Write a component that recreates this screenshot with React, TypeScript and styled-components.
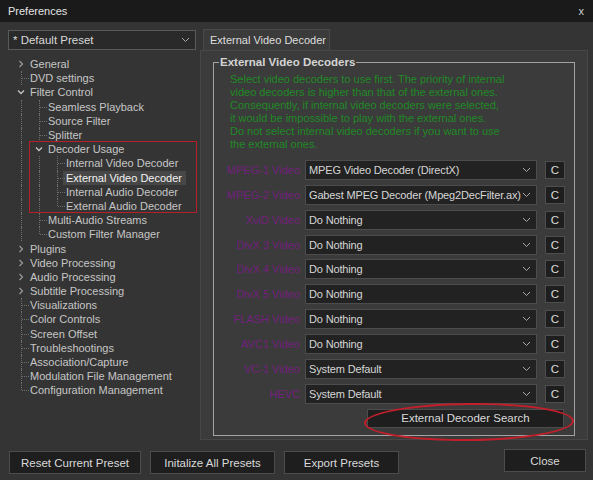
import React from 'react';
import styled, { createGlobalStyle } from 'styled-components';

const Global = createGlobalStyle`
  html, body { margin: 0; padding: 0; background: #343434; }
  body { font-family: "Liberation Sans", Arial, sans-serif; }
  * { box-sizing: border-box; }
`;

const Window = styled.div`
  width: 593px;
  height: 480px;
  background: #343434;
  display: flex;
  flex-direction: column;
  overflow: hidden;
  color: #cfcfcf;
  font-size: 11px;
`;

const TitleBar = styled.div`
  height: 22px;
  flex: none;
  background: #1a1a1a;
  display: flex;
  align-items: center;
  justify-content: space-between;
  padding: 0 9px 0 8px;
  color: #e4e4e4;
  font-size: 11px;
`;

const CloseX = styled.span`
  font-size: 11px;
  color: #d0d0d0;
`;

const Main = styled.div`
  display: flex;
  height: 418px;
  padding: 7px 5px 0 8px;
  gap: 4px;
  flex: none;
`;

const LeftCol = styled.div`
  width: 188px;
  display: flex;
  flex-direction: column;
`;

const PresetSelect = styled.div`
  margin-top: 1px;
  height: 20px;
  border: 1px solid #5a5a5a;
  background: #2a2a2a;
  display: flex;
  align-items: center;
  justify-content: space-between;
  padding: 0 5px 0 4px;
  color: #d8d8d8;
  font-size: 11.5px;
`;

const Tree = styled.div`
  position: relative;
  margin-top: 7px;
  padding-left: 4px;
  display: flex;
  flex-direction: column;
`;

const TreeRow = styled.div`
  height: 14.2px;
  display: flex;
  align-items: stretch;
  white-space: nowrap;
`;

const Guide = styled.span<{ $vt?: boolean; $vb?: boolean; $h?: boolean }>`
  position: relative;
  width: 18px;
  flex: none;
  display: flex;
  align-items: center;
  justify-content: center;
  &::before {
    content: '';
    display: ${p => (p.$vt || p.$vb ? 'block' : 'none')};
    position: absolute;
    left: 9px;
    top: ${p => (p.$vt ? '0' : '50%')};
    bottom: ${p => (p.$vb ? '0' : '50%')};
    border-left: 1px dotted #6e6e6e;
  }
  &::after {
    content: '';
    display: ${p => (p.$h ? 'block' : 'none')};
    position: absolute;
    left: 10px;
    width: 7px;
    top: 50%;
    border-top: 1px dotted #6e6e6e;
  }
`;

const TreeLabel = styled.span<{ $selected?: boolean }>`
  display: flex;
  align-items: center;
  margin-left: -3px;
  padding: 0 4px 0 3px;
  background: ${p => (p.$selected ? '#474747' : 'transparent')};
  color: ${p => (p.$selected ? '#f2f2f2' : '#c6c6c6')};
  font-size: 11px;
`;

const RedBox = styled.div`
  position: absolute;
  left: 21px;
  top: 84px;
  width: 168px;
  height: 72px;
  border: 1px solid #b3222a;
  pointer-events: none;
`;

const RightCol = styled.div`
  width: 388px;
  display: flex;
  flex-direction: column;
`;

const Tab = styled.div`
  margin-left: 3px;
  width: 127px;
  height: 21px;
  background: #3b3b3b;
  border: 1px solid #4a4a4a;
  border-bottom: none;
  display: flex;
  align-items: center;
  padding-left: 6px;
  color: #dedede;
  font-size: 11px;
  white-space: nowrap;
`;

const Panel = styled.div`
  height: 390px;
  background: #3b3b3b;
  border: 1px solid #474747;
  padding: 5px 12px 3px 12px;
  display: flex;
  flex-direction: column;
`;

const GroupBox = styled.fieldset`
  margin: 0;
  flex: 1;
  border: 1px solid #a3a3a3;
  padding: 0;
  min-width: 0;
`;

const Legend = styled.legend`
  margin-left: 5px;
  padding: 0 1px;
  color: #d4d4d4;
  font-weight: bold;
  font-size: 11.5px;
  line-height: 13px;
`;

const GroupInner = styled.div`
  display: flex;
  flex-direction: column;
`;

const Notice = styled.div`
  margin-top: 4px;
  padding-left: 16px;
  color: #1f8a25;
  font-size: 11px;
  line-height: 13px;
  white-space: pre;
`;

const Rows = styled.div`
  margin-top: 9px;
  display: flex;
  flex-direction: column;
  gap: 4.85px;
`;

const DecoderRow = styled.div`
  display: flex;
  align-items: center;
  height: 20px;
`;

const RowLabel = styled.span`
  width: 86px;
  text-align: right;
  color: #74207e;
  font-size: 11px;
  margin-right: 5px;
  white-space: nowrap;
`;

const Combo = styled.div`
  width: 232px;
  height: 20px;
  background: #222222;
  border: 1px solid #4c4c4c;
  display: flex;
  align-items: center;
  justify-content: space-between;
  padding: 0 5px 0 3px;
  color: #d6d6d6;
  font-size: 11px;
  letter-spacing: -0.15px;
  white-space: nowrap;
`;

const CButton = styled.div`
  margin-left: 8px;
  width: 20px;
  height: 18px;
  background: #1e1e1e;
  border: 1px solid #4e4e4e;
  display: flex;
  align-items: center;
  justify-content: center;
  color: #dcdcdc;
  font-size: 11.5px;
`;

const SearchWrap = styled.div`
  position: relative;
  align-self: flex-end;
  margin-top: 5px;
  margin-right: 10px;
`;

const DarkButton = styled.div<{ $w: number; $h?: number }>`
  width: ${p => p.$w}px;
  height: ${p => p.$h ?? 23}px;
  background: #1e1e1e;
  border: 1px solid #4c4c4c;
  display: flex;
  align-items: center;
  justify-content: center;
  color: #dadada;
  font-size: 11.5px;
  white-space: nowrap;
`;

const Ellipse = styled.div`
  position: absolute;
  left: -3px;
  top: -6px;
  width: 210px;
  height: 38px;
  border: 2px solid #c21f2b;
  border-radius: 50%;
  transform: rotate(-0.6deg);
  pointer-events: none;
`;

const BottomBar = styled.div`
  display: flex;
  align-items: flex-start;
  padding: 9px 7px 0 9px;
`;

const BottomButtons = styled.div`
  display: flex;
  gap: 9px;
  margin-top: 2px;
`;

const CloseWrap = styled.div`
  margin-left: auto;
`;

const Chevron = ({ dir }: { dir: 'right' | 'down' }) =>
  dir === 'right' ? (
    <svg width="6" height="8" viewBox="0 0 6 8">
      <polyline points="1.5,1 4.5,4 1.5,7" fill="none" stroke="#9a9a9a" strokeWidth="1.2" />
    </svg>
  ) : (
    <svg width="8" height="6" viewBox="0 0 8 6">
      <polyline points="1,1.5 4,4.5 7,1.5" fill="none" stroke="#c4c4c4" strokeWidth="1.3" />
    </svg>
  );

const ComboArrow = () => (
  <svg width="9" height="6" viewBox="0 0 9 6">
    <polyline points="1,1 4.5,4.5 8,1" fill="none" stroke="#a8a8a8" strokeWidth="1" />
  </svg>
);

type Kind = 'leaf' | 'collapsed' | 'expanded';
type Node = { label: string; depth: number; kind: Kind; selected?: boolean };

const nodes: Node[] = [
  { label: 'General', depth: 0, kind: 'collapsed' },
  { label: 'DVD settings', depth: 0, kind: 'leaf' },
  { label: 'Filter Control', depth: 0, kind: 'expanded' },
  { label: 'Seamless Playback', depth: 1, kind: 'leaf' },
  { label: 'Source Filter', depth: 1, kind: 'leaf' },
  { label: 'Splitter', depth: 1, kind: 'leaf' },
  { label: 'Decoder Usage', depth: 1, kind: 'expanded' },
  { label: 'Internal Video Decoder', depth: 2, kind: 'leaf' },
  { label: 'External Video Decoder', depth: 2, kind: 'leaf', selected: true },
  { label: 'Internal Audio Decoder', depth: 2, kind: 'leaf' },
  { label: 'External Audio Decoder', depth: 2, kind: 'leaf' },
  { label: 'Multi-Audio Streams', depth: 1, kind: 'leaf' },
  { label: 'Custom Filter Manager', depth: 1, kind: 'leaf' },
  { label: 'Plugins', depth: 0, kind: 'collapsed' },
  { label: 'Video Processing', depth: 0, kind: 'collapsed' },
  { label: 'Audio Processing', depth: 0, kind: 'collapsed' },
  { label: 'Subtitle Processing', depth: 0, kind: 'collapsed' },
  { label: 'Visualizations', depth: 0, kind: 'leaf' },
  { label: 'Color Controls', depth: 0, kind: 'leaf' },
  { label: 'Screen Offset', depth: 0, kind: 'leaf' },
  { label: 'Troubleshootings', depth: 0, kind: 'leaf' },
  { label: 'Association/Capture', depth: 0, kind: 'leaf' },
  { label: 'Modulation File Management', depth: 0, kind: 'leaf' },
  { label: 'Configuration Management', depth: 0, kind: 'leaf' },
];

const isLast = (i: number) => {
  const d = nodes[i].depth;
  for (let j = i + 1; j < nodes.length; j++) {
    if (nodes[j].depth < d) return true;
    if (nodes[j].depth === d) return false;
  }
  return true;
};

const ancestorIndex = (i: number, depth: number) => {
  for (let j = i - 1; j >= 0; j--) if (nodes[j].depth === depth) return j;
  return -1;
};

const decoders: [string, string][] = [
  ['MPEG-1 Video', 'MPEG Video Decoder (DirectX)'],
  ['MPEG-2 Video', 'Gabest MPEG Decoder (Mpeg2DecFilter.ax)'],
  ['XviD Video', 'Do Nothing'],
  ['DivX 3 Video', 'Do Nothing'],
  ['DivX 4 Video', 'Do Nothing'],
  ['DivX 5 Video', 'Do Nothing'],
  ['FLASH Video', 'Do Nothing'],
  ['AVC1 Video', 'Do Nothing'],
  ['VC-1 Video', 'System Default'],
  ['HEVC', 'System Default'],
];

const notice = [
  'Select video decoders to use first. The priority of internal',
  'video decoders is higher than that of the external ones.',
  'Consequently, if internal video decoders were selected,',
  'it would be impossible to play with the external ones.',
  'Do not select internal video decoders if you want to use',
  'the external ones.',
].join('\n');

export default function App() {
  return (
    <Window>
      <Global />
      <TitleBar>
        <span>Preferences</span>
        <CloseX>x</CloseX>
      </TitleBar>
      <Main>
        <LeftCol>
          <PresetSelect>
            <span>* Default Preset</span>
            <ComboArrow />
          </PresetSelect>
          <Tree>
            {nodes.map((n, i) => {
              const guides = [];
              for (let k = 0; k < n.depth; k++) {
                const a = ancestorIndex(i, k);
                const cont = a >= 0 && !isLast(a);
                guides.push(<Guide key={k} $vt={cont} $vb={cont} />);
              }
              const own =
                n.kind === 'leaf' ? (
                  <Guide key="own" $vt={i > 0} $vb={!isLast(i)} $h />
                ) : (
                  <Guide key="own">
                    <Chevron dir={n.kind === 'expanded' ? 'down' : 'right'} />
                  </Guide>
                );
              return (
                <TreeRow key={n.label}>
                  {guides}
                  {own}
                  <TreeLabel $selected={n.selected}>{n.label}</TreeLabel>
                </TreeRow>
              );
            })}
            <RedBox />
          </Tree>
        </LeftCol>
        <RightCol>
          <Tab>External Video Decoder</Tab>
          <Panel>
            <GroupBox>
              <Legend>External Video Decoders</Legend>
              <GroupInner>
                <Notice>{notice}</Notice>
                <Rows>
                  {decoders.map(([label, value]) => (
                    <DecoderRow key={label}>
                      <RowLabel>{label}</RowLabel>
                      <Combo>
                        <span>{value}</span>
                        <ComboArrow />
                      </Combo>
                      <CButton>C</CButton>
                    </DecoderRow>
                  ))}
                </Rows>
                <SearchWrap>
                  <DarkButton $w={197} $h={19}>External Decoder Search</DarkButton>
                  <Ellipse />
                </SearchWrap>
              </GroupInner>
            </GroupBox>
          </Panel>
        </RightCol>
      </Main>
      <BottomBar>
        <BottomButtons>
          <DarkButton $w={132}>Reset Current Preset</DarkButton>
          <DarkButton $w={125}>Initalize All Presets</DarkButton>
          <DarkButton $w={115}>Export Presets</DarkButton>
        </BottomButtons>
        <CloseWrap>
          <DarkButton $w={82}>Close</DarkButton>
        </CloseWrap>
      </BottomBar>
    </Window>
  );
}
